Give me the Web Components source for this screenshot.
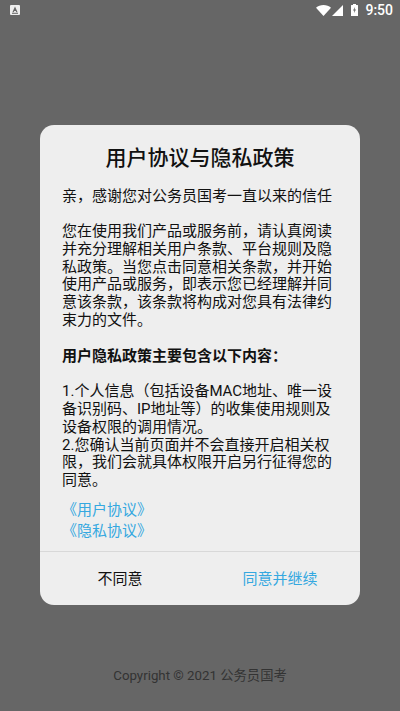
<!DOCTYPE html>
<html lang="zh">
<head>
<meta charset="utf-8">
<title>用户协议与隐私政策</title>
<style>
    html, body { margin: 0; padding: 0; height: 100%; background: #666; }
    body { font-family: Roboto, "Noto Sans CJK SC", sans-serif; }
</style>
</head>
<body>
<app-screen>
    <status-bar slot="status"></status-bar>
    <privacy-dialog slot="dialog">
        <span slot="title">用户协议与隐私政策</span>
        <p>亲，感谢您对公务员国考一直以来的信任</p>
        <p>您在使用我们产品或服务前，请认真阅读并充分理解相关用户条款、平台规则及隐私政策。当您点击同意相关条款，并开始使用产品或服务，即表示您已经理解并同意该条款，该条款将构成对您具有法律约束力的文件。</p>
        <p><b>用户隐私政策主要包含以下内容：</b></p>
        <p>1.个人信息（包括设备MAC地址、唯一设备识别码、IP地址等）的收集使用规则及设备权限的调用情况。<br>2.您确认当前页面并不会直接开启相关权限，我们会就具体权限开启另行征得您的同意。</p>
        <a slot="links">《用户协议》</a>
        <a slot="links">《隐私协议》</a>
        <span slot="cancel">不同意</span>
        <span slot="confirm">同意并继续</span>
    </privacy-dialog>
    <span slot="footer">Copyright © 2021 公务员国考</span>
</app-screen>

<script>
    class AppScreen extends HTMLElement {
        constructor() {
            super();
            this.attachShadow({ mode: "open" }).innerHTML = `
            <style>
                :host {
                    display: grid;
                    grid-template-rows: 24px 101px 480px 1fr;
                    height: 711px;
                    width: 400px;
                    background: #666;
                }
                .status { grid-row: 1; }
                .dialog { grid-row: 3; padding: 0 40px; }
                .footer {
                    grid-row: 4;
                    padding-top: 62px;
                    text-align: center;
                    font-size: 13.3px;
                    line-height: 18px;
                    color: #333;
                }
            </style>
            <div class="status"><slot name="status"></slot></div>
            <div class="dialog"><slot name="dialog"></slot></div>
            <div class="footer"><slot name="footer"></slot></div>
            `;
        }
    }

    class StatusBar extends HTMLElement {
        constructor() {
            super();
            this.attachShadow({ mode: "open" }).innerHTML = `
            <style>
                :host {
                    display: flex;
                    align-items: center;
                    height: 20px;
                    padding: 0 7px 0 10px;
                    color: #fff;
                    font: 500 14px Roboto, sans-serif;
                }
                svg { display: block; }
                .right { margin-left: auto; display: flex; align-items: center; }
                .signal { margin-left: 1px; }
                .battery { margin: 0 7px 0 8px; }
            </style>
            <svg width="10" height="10" viewBox="0 0 10 10">
                <rect width="10" height="10" rx="1" fill="#eee"/>
                <path d="M5 1.5 2.4 7.2h1.3l.5-1.2h1.6l.5 1.2h1.3z" fill="#666"/>
                <rect x="2" y="7.8" width="6" height="1" fill="#666"/>
            </svg>
            <div class="right">
                <svg width="15" height="11" viewBox="0 0 15 11"><path d="M0 2.8C2 1 4.6 0 7.5 0S13 1 15 2.8L7.5 11z" fill="#fff"/></svg>
                <svg class="signal" width="11" height="11" viewBox="0 0 11 11" ><path d="M11 0v11H0z" fill="#fff"/></svg>
                <svg class="battery" width="7" height="12" viewBox="0 0 7 12">
                    <path d="M2 0h3v1h1.5a.5.5 0 0 1 .5.5V12H0V1.500a.5.5 0 0 1 .5-.5H2z" fill="#fff"/>
                    <path d="M4 3 2 6.500h1.300L3 9l2-3.500H3.700z" fill="#666"/>
                </svg>
                <span>9:50</span>
            </div>
            `;
        }
    }

    class PrivacyDialog extends HTMLElement {
        constructor() {
            super();
            this.attachShadow({ mode: "open" }).innerHTML = `
            <style>
                :host {
                    display: flex;
                    flex-direction: column;
                    height: 480px;
                    background: #eee;
                    border-radius: 14px;
                    color: #111;
                    font-family: Roboto, "Noto Sans CJK SC", sans-serif;
                }
                .title {
                    padding-top: 17px;
                    height: 32px;
                    line-height: 32px;
                    font-size: 21px;
                    font-weight: 500;
                    text-align: center;
                }
                .body {
                    padding: 13.5px 22px 0;
                    font-size: 15px;
                    line-height: 17.8px;
                }
                ::slotted(p) {
                    margin: 0 0 17.8px;
                }
                ::slotted(p:last-of-type) {
                    margin-bottom: 9.5px;
                }
                .links {
                    display: flex;
                    flex-direction: column;
                    padding: 0 22px;
                    color: #35a8e0;
                    font-size: 15px;
                    line-height: 21px;
                }
                .actions {
                    margin-top: auto;
                    height: 51px;
                    padding-bottom: 2px;
                    border-top: 1px solid #d8d8d8;
                    display: grid;
                    grid-template-columns: 1fr 1fr;
                    align-items: center;
                    text-align: center;
                    font-size: 15px;
                }
                .confirm { color: #35a8e0; }
            </style>
            <div class="title"><slot name="title"></slot></div>
            <div class="body"><slot></slot></div>
            <div class="links"><slot name="links"></slot></div>
            <div class="actions">
                <div class="cancel"><slot name="cancel"></slot></div>
                <div class="confirm"><slot name="confirm"></slot></div>
            </div>
            `;
        }
    }

    customElements.define("app-screen", AppScreen);
    customElements.define("status-bar", StatusBar);
    customElements.define("privacy-dialog", PrivacyDialog);
</script>
</body>
</html>
